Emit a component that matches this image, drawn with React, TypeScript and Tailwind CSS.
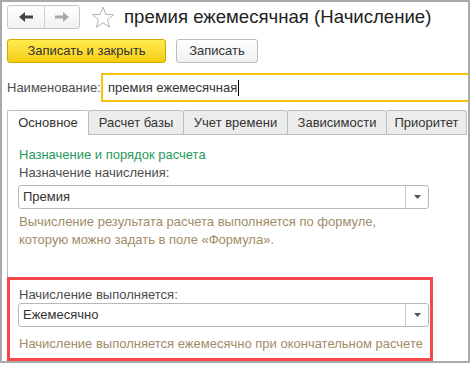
const tabs = [
  { name: 'Основное', w: 'w-[81px]', active: true },
  { name: 'Расчет базы', w: 'w-[95px]' },
  { name: 'Учет времени', w: 'w-[104px]' },
  { name: 'Зависимости', w: 'w-[99px]' },
  { name: 'Приоритет', w: 'w-[81px]' },
];

const Arrow = ({ dir, color }: { dir: 'left' | 'right'; color: string }) => (
  <svg width="14" height="10" viewBox="0 0 14 10">
    {dir === 'left' ? (
      <path d="M0 5 L6 0 L6 3.5 L14 3.5 L14 6.5 L6 6.5 L6 10 Z" fill={color} />
    ) : (
      <path d="M14 5 L8 0 L8 3.5 L0 3.5 L0 6.5 L8 6.5 L8 10 Z" fill={color} />
    )}
  </svg>
);

const Select = ({ value }: { value: string }) => (
  <div className="flex h-[24px] w-[411px] items-stretch rounded-[3px] border border-[#b8b8b8] bg-white">
    <div className="flex flex-1 items-center pl-[4px] text-[13px] text-[#333]">{value}</div>
    <div className="flex w-[23px] items-center justify-center border-l border-[#c8c8c8]">
      <svg width="7" height="4" viewBox="0 0 7 4">
        <path d="M0 0 L7 0 L3.5 4 Z" fill="#555" />
      </svg>
    </div>
  </div>
);

const App = () => {
  return (
    <div className="h-[365px] w-[470px] bg-white">
      <div className="relative h-[363px] w-[470px] overflow-hidden border-2 border-[#a9a9a9] bg-white font-['Liberation_Sans',Arial,sans-serif]">
        {/* Header */}
        <div className="mt-[3px] flex h-[24px] items-center pl-[5px]">
          <div className="flex h-[24px] w-[73px] rounded-[3px] border border-[#c6c6c6] bg-gradient-to-b from-white to-[#f1f1f1]">
            <div className="flex w-[37px] items-center justify-center border-r border-[#d0d0d0]">
              <Arrow dir="left" color="#444" />
            </div>
            <div className="flex flex-1 items-center justify-center">
              <Arrow dir="right" color="#a8a8a8" />
            </div>
          </div>
          <svg className="ml-[11px]" width="24" height="23" viewBox="0 0 24 23">
            <path
              d="M12 1 L14.8 8.4 L22.6 8.7 L16.5 13.6 L18.6 21.2 L12 16.8 L5.4 21.2 L7.5 13.6 L1.4 8.7 L9.2 8.4 Z"
              fill="none"
              stroke="#b4b4b4"
              strokeWidth="1"
              strokeLinejoin="round"
            />
          </svg>
          <div className="ml-[9px] text-[18.6px] leading-[24px] text-[#222]">премия ежемесячная (Начисление)</div>
        </div>

        {/* Buttons */}
        <div className="mt-[10px] flex gap-[10px] pl-[5px]">
          <button className="h-[24px] w-[159px] rounded-[3px] border border-[#cfa900] bg-gradient-to-b from-[#ffec4f] to-[#f5cd00] text-[13px] text-[#333]">
            Записать и закрыть
          </button>
          <button className="h-[24px] w-[82px] rounded-[3px] border border-[#bcbcbc] bg-gradient-to-b from-white to-[#f0f0f0] text-[13px] text-[#333]">
            Записать
          </button>
        </div>

        {/* Name */}
        <div className="mt-[10px] flex h-[29px] items-center pl-[5px]">
          <div className="w-[94px] text-[13px] text-[#4d4d4d]">Наименование:</div>
          <div className="-mr-[6px] flex h-[29px] flex-1 items-center border-2 border-[#f5c30a] pl-[5px] text-[13px] text-[#333]">
            премия ежемесячная
            <span className="ml-[1px] inline-block h-[16px] w-[1px] bg-black" />
          </div>
        </div>

        {/* Tabs */}
        <div className="mt-[8px] flex pl-[5px]">
          {tabs.map((t, i) => (
            <div
              key={t.name}
              className={`flex h-[25px] items-center justify-center rounded-t-[2px] border-t border-l border-[#bdbdbd] text-[13px] text-[#333] ${t.w} ${
                i === tabs.length - 1 ? 'border-r' : ''
              } ${t.active ? 'bg-white' : 'border-b bg-[#ececec]'}`}
            >
              {t.name}
            </div>
          ))}
        </div>

        {/* Panel */}
        <div className="ml-[5px] h-[240px] border-l border-[#bdbdbd] pl-[10px] pt-[12px]">
          <div className="pl-[1px] text-[13px] leading-[16px] text-[#1f9a5b]">Назначение и порядок расчета</div>
          <div className="mt-[2px] pl-[1px] text-[13px] leading-[16px] text-[#4d4d4d]">Назначение начисления:</div>
          <div className="mt-[4px]">
            <Select value="Премия" />
          </div>
          <div className="mt-[4px] pl-[1px] text-[13px] leading-[18px] text-[#a08c66]">
            Вычисление результата расчета выполняется по формуле,
            <br />
            которую можно задать в поле «Формула».
          </div>

          {/* Highlighted block */}
          <div className="-ml-[11px] mt-[28px] w-[426px] border-[3px] border-[#f5474a] pb-[6px] pl-[8px] pr-[2px] pt-[7px]">
            <div className="pl-[1px] text-[13px] leading-[16px] text-[#4d4d4d]">Начисление выполняется:</div>
            <Select value="Ежемесячно" />
            <div className="mt-[9px] pl-[1px] text-[13px] leading-[16px] text-[#a08c66]">
              Начисление выполняется ежемесячно при окончательном расчете
            </div>
          </div>
        </div>
      </div>
    </div>
  );
};

export default App;
